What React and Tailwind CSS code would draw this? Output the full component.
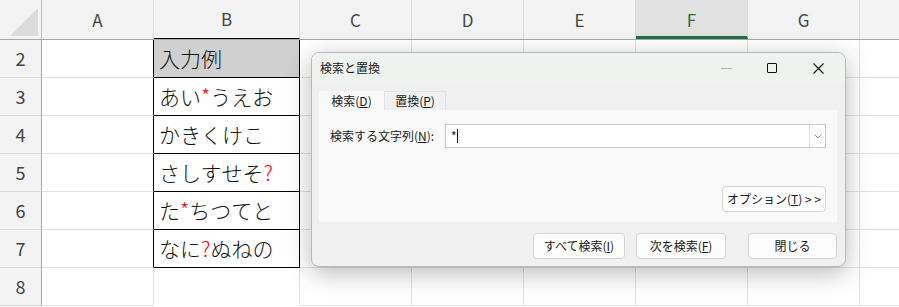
import React from 'react';

const COLS = ['A', 'B', 'C', 'D', 'E', 'F', 'G'];
const WIDTHS = ['w-[112px]', 'w-[146px]', 'w-[112px]', 'w-[112px]', 'w-[112px]', 'w-[112px]', 'w-[112px]'];

const R = ({ children }) => <span className="text-[#ff0000]">{children}</span>;

const ROWS = [
  { n: 2, b: '入力例', head: true },
  { n: 3, b: <>あい<R>*</R>うえお</> },
  { n: 4, b: 'かきくけこ' },
  { n: 5, b: <>さしすせそ<R>?</R></> },
  { n: 6, b: <>た<R>*</R>ちつてと</> },
  { n: 7, b: <>なに<R>?</R>ぬねの</> },
  { n: 8, b: null, last: true },
];

function HeaderRow() {
  return (
    <div className="flex h-[40px] bg-[#f3f3f3] border-b border-[#a8a8a8]">
      <div className="w-[42px] shrink-0 border-r border-[#bcbcbc] relative">
        <svg width="42" height="39" className="absolute left-0 top-0">
          <polygon points="10,36 38,8 38,36" fill="#dcdcdc" />
        </svg>
      </div>
      {COLS.map((c, i) => (
        <div
          key={c}
          className={`${WIDTHS[i]} shrink-0 flex items-center justify-center text-[17px] border-r border-[#dadada] ${
            c === 'F' ? 'bg-[#e1e1e1] text-[#1e7145] border-b-[3px] border-b-[#1e7145] pt-[3px]' : 'text-[#444]'
          } ${c === 'B' ? '!border-b !border-b-black' : ''}`}
        >
          {c}
        </div>
      ))}
      <div className="flex-1" />
    </div>
  );
}

function Row({ row }) {
  return (
    <div className="flex h-[38px]">
      <div className="w-[42px] shrink-0 bg-[#f3f3f3] border-r border-[#a8a8a8] border-b border-b-[#dadada] flex items-center justify-center text-[18px] text-[#444]">
        {row.n}
      </div>
      <div className={`w-[112px] shrink-0 border-b border-[#e1e1e1] border-r ${row.last ? 'border-r-[#e1e1e1]' : 'border-r-black'}`} />
      <div
        className={`w-[146px] shrink-0 flex items-center pl-[5px] text-[21px] font-light text-[#111] border-r ${
          row.last ? 'border-r-[#e1e1e1]' : 'border-r-black border-b border-b-black'
        } ${row.head ? 'bg-[#d0d0d0]' : ''}`}
      >
        {row.b}
      </div>
      {[0, 1, 2, 3, 4].map((i) => (
        <div key={i} className="w-[112px] shrink-0 border-r border-b border-[#e1e1e1]" />
      ))}
      <div className="flex-1 border-b border-[#e1e1e1]" />
    </div>
  );
}

function Btn({ children, className = '' }) {
  return (
    <div
      className={`h-[26px] flex items-center justify-center rounded-[4px] bg-[#fdfdfd] border border-[#d3d3d3] text-[12px] text-[#1a1a1a] ${className}`}
    >
      {children}
    </div>
  );
}

function Dialog() {
  return (
    <div className="absolute left-[311px] top-[52px] w-[535px] h-[215px] rounded-[8px] bg-[#f0f0f0] border border-[#b9b9b9] shadow-[0_6px_24px_rgba(0,0,0,0.28)] overflow-hidden flex flex-col text-[12px] text-[#1a1a1a]">
      <div className="h-[30px] shrink-0 bg-[#eef3ef] flex items-center pl-[8px]">
        <span className="flex-1">検索と置換</span>
        <div className="w-[46px] flex justify-center">
          <div className="w-[11px] h-px bg-[#b0b0b0]" />
        </div>
        <div className="w-[46px] flex justify-center">
          <div className="w-[10px] h-[10px] border border-[#111] rounded-[1px]" />
        </div>
        <div className="w-[46px] flex justify-center mr-[4px]">
          <svg width="11" height="11" viewBox="0 0 11 11">
            <path d="M0.5 0.5 L10.5 10.5 M10.5 0.5 L0.5 10.5" stroke="#111" strokeWidth="1.1" />
          </svg>
        </div>
      </div>
      <div className="flex-1 flex flex-col px-[7px] pt-[8px]">
        <div className="flex h-[19px]">
          <div className="w-[65px] bg-[#f9f9f9] flex items-center justify-center">
            検索(<span className="underline">D</span>)
          </div>
          <div className="w-[62px] bg-[#f0f0f0] border border-b-0 border-[#e3e3e3] flex items-center justify-center">
            置換(<span className="underline">P</span>)
          </div>
        </div>
        <div className="h-[112px] mr-[1px] bg-[#f9f9f9] flex flex-col px-[11px] pt-[14px]">
          <div className="flex items-center h-[24px]">
            <span className="w-[115px]">
              検索する文字列(<span className="underline">N</span>):
            </span>
            <div className="flex-1 h-[24px] bg-white border border-[#c8c8c8] flex items-center">
              <span className="pl-[5px]">*</span>
              <div className="w-px h-[14px] bg-black" />
              <div className="flex-1" />
              <div className="w-[16px] h-full border-l border-[#e2e2e2] flex items-center justify-center">
                <svg width="8" height="5" viewBox="0 0 8 5">
                  <path d="M0.5 0.5 L4 4 L7.5 0.5" stroke="#888" fill="none" strokeWidth="0.9" />
                </svg>
              </div>
            </div>
          </div>
          <div className="flex justify-end mt-[38px]">
            <Btn className="w-[104px] h-[25px]">
              オプション(<span className="underline">T</span>)&nbsp;&gt;&nbsp;&gt;
            </Btn>
          </div>
        </div>
        <div className="flex justify-end mt-[11px] pr-[1px]">
          <Btn className="w-[92px]">
            すべて検索(<span className="underline">I</span>)
          </Btn>
          <Btn className="w-[90px] ml-[11px] border-[#3d8fd6]">
            次を検索(<span className="underline">F</span>)
          </Btn>
          <Btn className="w-[89px] ml-[22px]">閉じる</Btn>
        </div>
      </div>
    </div>
  );
}

export default function App() {
  return (
    <div
      className="relative w-[899px] h-[307px] overflow-hidden bg-white"
      style={{ fontFamily: '"Noto Sans CJK JP", "Noto Sans", sans-serif' }}
    >
      <HeaderRow />
      {ROWS.map((r) => (
        <Row key={r.n} row={r} />
      ))}
      <Dialog />
    </div>
  );
}
